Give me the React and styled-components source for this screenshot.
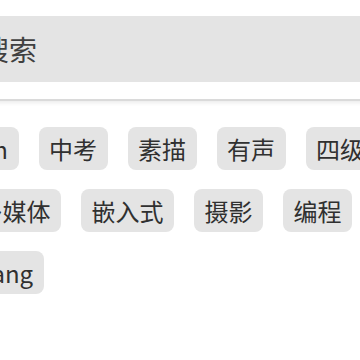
import React from 'react'
import styled, { createGlobalStyle } from 'styled-components'

const GlobalStyle = createGlobalStyle`
  html, body {
    margin: 0;
    padding: 0;
    background: #fff;
    overflow: hidden;
  }
  body {
    font-family: "Noto Sans CJK SC", "Noto Sans", sans-serif;
  }
`

const rows = [
  { shift: -83, tags: ['Python', '中考', '素描', '有声', '四级'] },
  { shift: -32, tags: ['多媒体', '嵌入式', '摄影', '编程'] },
  { shift: -57, tags: ['Golang'] },
]

const App = () => {
  return (
    <>
      <GlobalStyle />
      <Page>
        <Header>
          <SearchBox placeholder='搜索' />
        </Header>
        <TagCloud>
          {rows.map((row, i) => (
            <TagRow key={i} $shift={row.shift}>
              {row.tags.map((t) => (
                <Tag key={t}>{t}</Tag>
              ))}
            </TagRow>
          ))}
        </TagCloud>
      </Page>
    </>
  )
}

const Page = styled.div`
  width: 360px;
  height: 360px;
  overflow: hidden;
  background: #fff;
`

const Header = styled.header`
  height: 101px;
  padding-top: 16px;
  box-sizing: border-box;
  margin-left: -31px;
  width: 420px;
  border-bottom: 2px solid #dadada;
  box-shadow: 0 2px 4px rgba(0, 0, 0, 0.08);
`

const SearchBox = styled.input`
  display: block;
  width: 100%;
  height: 66px;
  box-sizing: border-box;
  border: none;
  outline: none;
  background: #e4e4e4;
  padding: 0 12px;
  font-family: "Noto Sans CJK SC", sans-serif;
  font-size: 28px;
  color: #333;
  &::placeholder {
    color: #404040;
  }
`

const TagCloud = styled.div`
  display: flex;
  flex-direction: column;
  gap: 19px;
  padding-top: 26px;
`

const TagRow = styled.div`
  display: flex;
  gap: 20px;
  margin-left: ${(p) => p.$shift}px;
  white-space: nowrap;
`

const Tag = styled.span`
  flex: none;
  display: flex;
  align-items: center;
  height: 43px;
  padding: 0 10.5px;
  border-radius: 8px;
  background: #e4e4e4;
  color: #303030;
  font-size: 24px;
  line-height: 1;
`

export default App
